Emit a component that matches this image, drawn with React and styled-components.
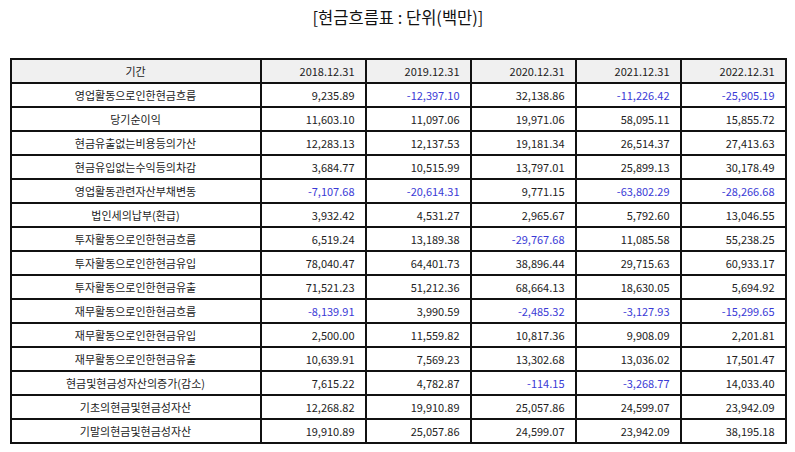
import styled, { createGlobalStyle } from 'styled-components'

const GlobalStyle = createGlobalStyle`
    html, body {
        margin: 0;
        padding: 0;
        background: #ffffff;
        font-family: "Noto Sans CJK KR", "Noto Sans", sans-serif;
        color: #111111;
    }
`

const years = ['2018.12.31', '2019.12.31', '2020.12.31', '2021.12.31', '2022.12.31']

const rows = [
    ['영업활동으로인한현금흐름', '9,235.89', '-12,397.10', '32,138.86', '-11,226.42', '-25,905.19'],
    ['당기순이익', '11,603.10', '11,097.06', '19,971.06', '58,095.11', '15,855.72'],
    ['현금유출없는비용등의가산', '12,283.13', '12,137.53', '19,181.34', '26,514.37', '27,413.63'],
    ['현금유입없는수익등의차감', '3,684.77', '10,515.99', '13,797.01', '25,899.13', '30,178.49'],
    ['영업활동관련자산부채변동', '-7,107.68', '-20,614.31', '9,771.15', '-63,802.29', '-28,266.68'],
    ['법인세의납부(환급)', '3,932.42', '4,531.27', '2,965.67', '5,792.60', '13,046.55'],
    ['투자활동으로인한현금흐름', '6,519.24', '13,189.38', '-29,767.68', '11,085.58', '55,238.25'],
    ['투자활동으로인한현금유입', '78,040.47', '64,401.73', '38,896.44', '29,715.63', '60,933.17'],
    ['투자활동으로인한현금유출', '71,521.23', '51,212.36', '68,664.13', '18,630.05', '5,694.92'],
    ['재무활동으로인한현금흐름', '-8,139.91', '3,990.59', '-2,485.32', '-3,127.93', '-15,299.65'],
    ['재무활동으로인한현금유입', '2,500.00', '11,559.82', '10,817.36', '9,908.09', '2,201.81'],
    ['재무활동으로인한현금유출', '10,639.91', '7,569.23', '13,302.68', '13,036.02', '17,501.47'],
    ['현금및현금성자산의증가(감소)', '7,615.22', '4,782.87', '-114.15', '-3,268.77', '14,033.40'],
    ['기초의현금및현금성자산', '12,268.82', '19,910.89', '25,057.86', '24,599.07', '23,942.09'],
    ['기말의현금및현금성자산', '19,910.89', '25,057.86', '24,599.07', '23,942.09', '38,195.18'],
]

const App = () => {
    return (
        <Page>
            <GlobalStyle />
            <Title>[현금흐름표 : 단위(백만)]</Title>
            <Table>
                <colgroup>
                    <col style={{ width: 250 }} />
                    {years.map((y) => <col key={y} style={{ width: 105 }} />)}
                </colgroup>
                <thead>
                    <Row>
                        <HeadCell $center>기간</HeadCell>
                        {years.map((y) => <HeadCell key={y}>{y}</HeadCell>)}
                    </Row>
                </thead>
                <tbody>
                    {rows.map(([label, ...values]) => (
                        <Row key={label}>
                            <LabelCell>{label}</LabelCell>
                            {values.map((v, i) => (
                                <NumCell key={i} $negative={v.startsWith('-')}>{v}</NumCell>
                            ))}
                        </Row>
                    ))}
                </tbody>
            </Table>
        </Page>
    )
}

export default App

// styles
const Page = styled.div`
    width: 795px;
    height: 452px;
    padding: 0 9px 0 10px;
    box-sizing: border-box;
    display: flex;
    flex-direction: column;
    align-items: center;
`

const Title = styled.h1`
    margin: 5px 0 0;
    height: 53px;
    font-size: 16.5px;
    font-weight: 400;
    line-height: 24px;
    color: #111;
`

const Table = styled.table`
    width: 100%;
    border-collapse: collapse;
    table-layout: fixed;
    border: 2px solid #111;
`

const Row = styled.tr`
    height: 24px;
`

const cell = `
    padding: 0 10px;
    border: 2px solid #111;
    font-size: 11px;
    line-height: 1;
    white-space: nowrap;
`

const HeadCell = styled.th`
    ${cell}
    background: #f0f0f0;
    font-weight: 400;
    color: #222;
    text-align: ${(p) => (p.$center ? 'center' : 'right')};
`

const LabelCell = styled.td`
    ${cell}
    text-align: center;
    color: #222;
`

const NumCell = styled.td`
    ${cell}
    text-align: right;
    color: ${(p) => (p.$negative ? '#3a3ad6' : '#222')};
`
